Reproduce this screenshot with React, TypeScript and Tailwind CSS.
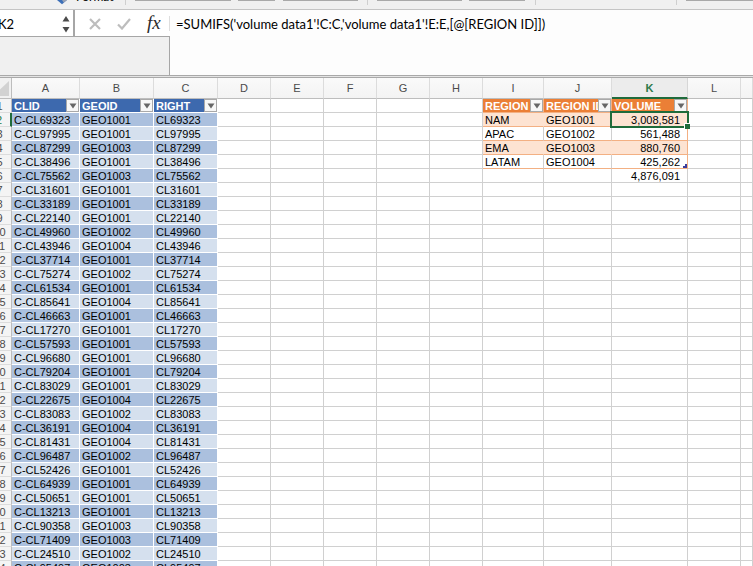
import type { ReactNode } from "react";

const accounts: [string, string][] = [
  ["CL69323", "GEO1001"],
  ["CL97995", "GEO1001"],
  ["CL87299", "GEO1003"],
  ["CL38496", "GEO1001"],
  ["CL75562", "GEO1003"],
  ["CL31601", "GEO1001"],
  ["CL33189", "GEO1001"],
  ["CL22140", "GEO1001"],
  ["CL49960", "GEO1002"],
  ["CL43946", "GEO1004"],
  ["CL37714", "GEO1001"],
  ["CL75274", "GEO1002"],
  ["CL61534", "GEO1001"],
  ["CL85641", "GEO1004"],
  ["CL46663", "GEO1001"],
  ["CL17270", "GEO1001"],
  ["CL57593", "GEO1001"],
  ["CL96680", "GEO1001"],
  ["CL79204", "GEO1001"],
  ["CL83029", "GEO1001"],
  ["CL22675", "GEO1004"],
  ["CL83083", "GEO1002"],
  ["CL36191", "GEO1004"],
  ["CL81431", "GEO1004"],
  ["CL96487", "GEO1002"],
  ["CL52426", "GEO1001"],
  ["CL64939", "GEO1001"],
  ["CL50651", "GEO1001"],
  ["CL13213", "GEO1001"],
  ["CL90358", "GEO1003"],
  ["CL71409", "GEO1003"],
  ["CL24510", "GEO1002"],
  ["CL95497", "GEO1003"],
];

const regions: [string, string, string][] = [
  ["NAM", "GEO1001", "3,008,581"],
  ["APAC", "GEO1002", "561,488"],
  ["EMA", "GEO1003", "880,760"],
  ["LATAM", "GEO1004", "425,262"],
  ["", "", "4,876,091"],
];

const letters = ["A", "B", "C", "D", "E", "F", "G", "H", "I", "J", "K", "L", ""];

function FilterHead({ label, tone }: { label: string; tone: "blue" | "orange" }) {
  const fill =
    tone === "blue" ? "bg-[#3d69ae] border-white" : "bg-[#eb7f36] border-[#f3b083]";
  return (
    <th scope="col" className={`h-[14px] border-r border-b p-0 ${fill}`}>
      <div className="flex h-[13px] items-center pl-[2px] text-left font-bold text-white">
        <span className="h-[13px] min-w-0 flex-1 overflow-hidden pt-[2px] leading-[11px] whitespace-nowrap">
          {label}
        </span>
        <button
          type="button"
          aria-label={`Filter ${label}`}
          className="flex h-[13px] w-[13px] shrink-0 items-center justify-center border border-[#a9a9a9] bg-[#f7f7f7]"
        >
          <svg viewBox="0 0 8 6" className="h-[6px] w-[8px]" fill="#666666">
            <path d="M0.500 0.500h7L4 5.500z" />
          </svg>
        </button>
      </div>
    </th>
  );
}

function Cell({ children, look = "border-[#d0d0d0]" }: { children?: ReactNode; look?: string }) {
  return (
    <td className={`h-[14px] border-r border-b p-0 pt-[2px] pl-[2px] leading-[11px] whitespace-nowrap ${look}`}>
      {children}
    </td>
  );
}

function RegionCells({ index }: { index: number }) {
  const row = regions[index];
  if (!row) {
    return (
      <>
        <Cell />
        <Cell />
        <Cell />
      </>
    );
  }
  const total = index === 4;
  const look = total
    ? "border-[#d0d0d0]"
    : index % 2 === 0
      ? "bg-[#fde3d2] border-b-[#f3b083] border-r-[#fde3d2]"
      : "border-b-[#f3b083] border-r-[#d0d0d0]";
  const valueLook = total
    ? "border-[#d0d0d0]"
    : index % 2 === 0
      ? "bg-[#fde3d2] border-[#f3b083]"
      : "border-[#f3b083]";
  return (
    <>
      <Cell look={look}>{row[0]}</Cell>
      <Cell look={look}>{row[1]}</Cell>
      <td className={`relative h-[14px] border-r border-b p-0 pt-[2px] pr-[7px] text-right leading-[11px] ${valueLook}`}>
        {row[2]}
        {index === 0 && (
          <span className="pointer-events-none absolute -top-[2px] -right-[2px] -bottom-[2px] -left-[2px] z-10 border-2 border-[#1f6b3b]">
            <span className="absolute -right-[3px] -bottom-[3px] h-[6px] w-[6px] border-t border-l border-white bg-[#1f6b3b]" />
          </span>
        )}
        {index === 3 && (
          <svg viewBox="0 0 4 4" className="absolute right-0 bottom-0 h-[4px] w-[4px]" fill="#3b3f9c">
            <path d="M2 0h2v4H0V2h2z" />
          </svg>
        )}
      </td>
    </>
  );
}

function RowHead({ n }: { n: number }) {
  const look =
    n === 2 ? "text-[#1f7a43] border-r-2 border-r-[#1f6b3b]" : "text-[#4a4a4a] border-r-[#bdbdbd] border-r";
  return (
    <th
      scope="row"
      className={`h-[14px] border-b border-b-[#dcdcdc] bg-[#f4f4f4] p-0 pt-[2px] text-center leading-[11px] font-normal ${look}`}
    >
      {n}
    </th>
  );
}

function Ribbon() {
  return (
    <div className="flex h-[10px] shrink-0 items-start overflow-hidden border-b border-[#c4c4c4] bg-[#f0f0f0] font-['Lato',sans-serif] text-[12px]">
      <svg viewBox="0 0 12 6" className="ml-14 h-[5px] w-[12px] shrink-0">
        <path d="M0 0h12L6 5z" fill="#3c6fb8" />
        <path d="M6 0h6L8 3z" fill="#98a2b3" />
      </svg>
      <span className="-mt-[11px] ml-2 w-[49px] shrink-0 leading-4 text-black">Format</span>
      <span className="h-[5px] w-px bg-[#cfcfcf]" />
      <span className="ml-[9px] h-px w-[96px] bg-[#a9a9a9]" />
      <span className="ml-[7px] h-px w-[37px] bg-[#a9a9a9]" />
      <span className="ml-[8px] h-px w-[75px] bg-[#a9a9a9]" />
      <span className="ml-[9px] h-[5px] w-px bg-[#cfcfcf]" />
      <span className="ml-[9px] h-px w-[85px] bg-[#a9a9a9]" />
      <span className="ml-[7px] h-px w-[56px] bg-[#a9a9a9]" />
      <span className="ml-[10px] h-[5px] w-px bg-[#cfcfcf]" />
      <span className="ml-[140px] h-[5px] w-px bg-[#cfcfcf]" />
      <span className="ml-[9px] h-px flex-1 bg-[#a9a9a9]" />
    </div>
  );
}

function FormulaBar() {
  return (
    <div className="flex h-[65px] shrink-0 bg-[#fdfdfd] font-['Lato','Carlito',sans-serif]">
      <div className="flex w-[170px] shrink-0 flex-col border-r border-[#a6a6a6]">
        <div className="-mr-px flex h-[27px] shrink-0 border-b border-[#a6a6a6] bg-white">
          <div className="flex w-[75px] items-center border-r-2 border-[#a6a6a6] pt-[2px]">
            <input
              aria-label="Name box"
              defaultValue="K2"
              className="-ml-[2px] w-[64px] bg-transparent p-0 text-[13px] leading-4 text-black outline-none"
            />
            <svg viewBox="0 0 8 18" className="h-[18px] w-[8px]" fill="#4b4b4b">
              <path d="M4 1l3.500 5.500h-7zM4 17.500l3.500-5.500h-7z" />
            </svg>
          </div>
          <button type="button" aria-label="Cancel" className="ml-3 flex w-[16px] items-center justify-center pt-[2px]">
            <svg viewBox="0 0 12 12" className="h-[12px] w-[12px]" stroke="#bdbdbd" strokeWidth="2.200">
              <path d="M1 1l10 10M11 1L1 11" />
            </svg>
          </button>
          <button type="button" aria-label="Enter" className="ml-[13px] flex w-[16px] items-center justify-center pt-[2px]">
            <svg viewBox="0 0 14 12" className="h-[12px] w-[14px]" fill="none" stroke="#bdbdbd" strokeWidth="2.200">
              <path d="M1 6.500l4 4L13 1" />
            </svg>
          </button>
          <button
            type="button"
            aria-label="Insert function"
            className="ml-[15px] font-['Liberation_Serif',serif] text-[19px] leading-5 text-[#2c2c2c] italic"
          >
            fx
          </button>
          <span className="mt-[6px] ml-auto h-[15px] w-px bg-[#dedede]" />
        </div>
        <div className="flex-1 bg-[#f0f0f0]" />
      </div>
      <div className="min-w-0 flex-1">
        <input
          aria-label="Formula"
          defaultValue="=SUMIFS('volume data1'!C:C,'volume data1'!E:E,[@[REGION ID]])"
          className="mt-1 ml-[6px] h-5 w-[calc(100%-8px)] bg-transparent p-0 text-[13px] leading-5 text-black outline-none"
        />
      </div>
    </div>
  );
}

export default function App() {
  return (
    <div className="flex h-screen flex-col overflow-hidden bg-white">
      <Ribbon />
      <FormulaBar />
      <div className="h-[3px] shrink-0 border-t border-b border-[#a9a9a9] bg-[#e4e4e4]" />
      <div className="-ml-3 min-h-0 flex-1 overflow-hidden">
        <table className="w-full table-fixed border-separate border-spacing-0 font-['Liberation_Sans',Arial,sans-serif] text-[11px] text-black">
          <colgroup>
            <col className="w-[24px]" />
            <col className="w-[68px]" />
            <col className="w-[74px]" />
            <col className="w-[64px]" />
            <col className="w-[53px]" />
            <col className="w-[53px]" />
            <col className="w-[53px]" />
            <col className="w-[53px]" />
            <col className="w-[53px]" />
            <col className="w-[61px]" />
            <col className="w-[68px]" />
            <col className="w-[76px]" />
            <col className="w-[53px]" />
            <col />
          </colgroup>
          <thead>
            <tr>
              <td className="h-[21px] border-r border-b border-[#bdbdbd] bg-[#f1f1f1] p-0">
                <svg viewBox="0 0 16 15" className="ml-[5px] h-[15px] w-[16px]" fill="#d2d2d2">
                  <path d="M16 0v15H0z" />
                </svg>
              </td>
              {letters.map((letter, i) => (
                <th
                  key={i}
                  scope="col"
                  className={
                    letter === "K"
                      ? "h-[21px] border-r border-b-2 border-r-[#d6d6d6] border-b-[#1f6b3b] bg-[#ececec] p-0 pt-px font-bold text-[#2c7a49]"
                      : "h-[21px] border-r border-b border-r-[#dcdcdc] border-b-[#bdbdbd] bg-linear-to-b from-[#fafafa] to-[#f3f3f3] p-0 font-normal text-[#4a4a4a]"
                  }
                >
                  {letter}
                </th>
              ))}
            </tr>
          </thead>
          <tbody>
            <tr>
              <RowHead n={1} />
              <FilterHead label="CLID" tone="blue" />
              <FilterHead label="GEOID" tone="blue" />
              <FilterHead label="RIGHT" tone="blue" />
              <Cell />
              <Cell />
              <Cell />
              <Cell />
              <Cell />
              <FilterHead label="REGION" tone="orange" />
              <FilterHead label="REGION ID" tone="orange" />
              <FilterHead label="VOLUME" tone="orange" />
              <Cell />
              <Cell />
            </tr>
            {accounts.map(([id, geo], i) => {
              const band = i % 2 === 0 ? "bg-[#abc0de] border-white" : "bg-[#d5e0ee] border-white";
              return (
                <tr key={id}>
                  <RowHead n={i + 2} />
                  <Cell look={band}>{`C-${id}`}</Cell>
                  <Cell look={band}>{geo}</Cell>
                  <Cell look={band}>{id}</Cell>
                  <Cell />
                  <Cell />
                  <Cell />
                  <Cell />
                  <Cell />
                  <RegionCells index={i} />
                  <Cell />
                  <Cell />
                </tr>
              );
            })}
          </tbody>
        </table>
      </div>
    </div>
  );
}
